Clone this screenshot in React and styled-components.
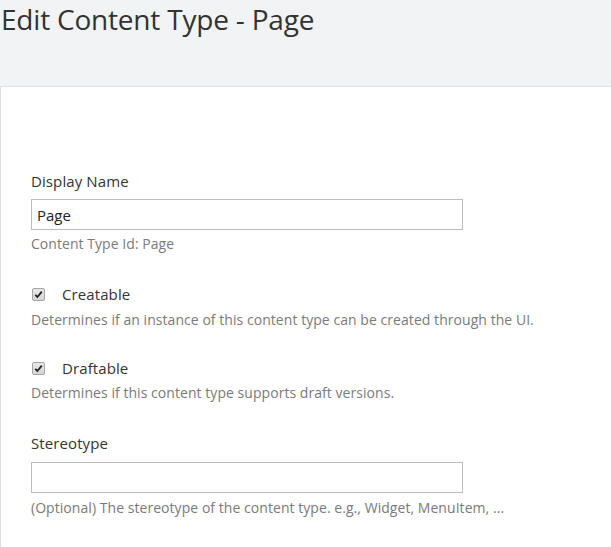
import React from "react";
import styled, { createGlobalStyle } from "styled-components";

const GlobalStyle = createGlobalStyle`
  html, body {
    margin: 0;
    padding: 0;
    background: #f2f3f5;
    font-family: "Open Sans", "Noto Sans", sans-serif;
    color: #333;
  }
`;

const Header = styled.div`
  height: 86px;
  background: #f2f3f5;
`;

const Title = styled.h1`
  margin: 0;
  padding: 0 0 0 1px;
  font-size: 28px;
  font-weight: 400;
  line-height: 38px;
  letter-spacing: -0.2px;
  color: #333;
`;

const Panel = styled.div`
  background: #fff;
  border-top: 1px solid #dfe1e4;
  border-left: 1px solid #dfe1e4;
  padding: 84px 30px 40px 30px;
  min-height: 380px;
`;

const Field = styled.div`
  margin-bottom: ${(p) => p.$gap || 26}px;
`;

const Label = styled.label`
  display: block;
  font-size: 15px;
  line-height: 20px;
  letter-spacing: 0.1px;
  margin-bottom: ${(p) => p.$gap || 8}px;
  color: #333;
`;

const TextInput = styled.input`
  display: block;
  box-sizing: border-box;
  width: 432px;
  height: 31px;
  border: 1px solid #bcbcbc;
  border-radius: 0;
  padding: 0 5px;
  font-family: inherit;
  font-size: 15px;
  color: #222;
  outline: none;
`;

const Help = styled.div`
  font-size: 14px;
  line-height: 20px;
  margin-top: ${(p) => p.$gap || 5}px;
  color: #7a7a7a;
  letter-spacing: 0.05px;
`;

const CheckRow = styled.div`
  display: flex;
  align-items: center;
  gap: 17px;
  font-size: 15px;
  line-height: 20px;
  letter-spacing: 0.1px;
`;

const Box = styled.span`
  display: inline-flex;
  align-items: center;
  justify-content: center;
  box-sizing: border-box;
  width: 13px;
  height: 13px;
  margin-left: 1px;
  border: 1px solid #a5a5a5;
  border-radius: 2px;
  background: linear-gradient(#e8e8e8, #d6d6d6);
`;

const Check = ({ label }) => (
  <CheckRow>
    <Box>
      <svg width="9" height="9" viewBox="0 0 9 9">
        <path d="M1.2 4.8 L3.4 7 L7.8 1.6" fill="none" stroke="#222" strokeWidth="1.8" />
      </svg>
    </Box>
    <span>{label}</span>
  </CheckRow>
);

export default function App() {
  return (
    <>
      <GlobalStyle />
      <Header>
        <Title>Edit Content Type - Page</Title>
      </Header>
      <Panel>
        <Field $gap={30}>
          <Label>Display Name</Label>
          <TextInput defaultValue="Page" />
          <Help $gap={4}>Content Type Id: Page</Help>
        </Field>
        <Field $gap={28}>
          <Check label="Creatable" />
          <Help $gap={6}>Determines if an instance of this content type can be created through the UI.</Help>
        </Field>
        <Field $gap={30}>
          <Check label="Draftable" />
          <Help>Determines if this content type supports draft versions.</Help>
        </Field>
        <Field>
          <Label $gap={9}>Stereotype</Label>
          <TextInput />
          <Help>(Optional) The stereotype of the content type. e.g., Widget, MenuItem, ...</Help>
        </Field>
      </Panel>
    </>
  );
}
